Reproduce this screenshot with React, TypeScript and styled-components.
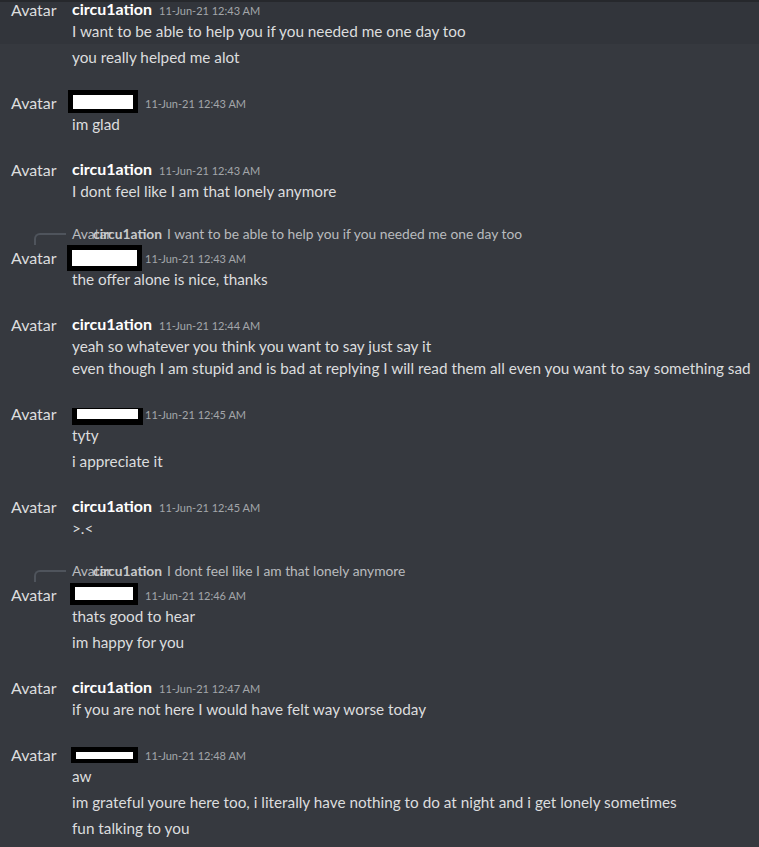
import React from "react";
import styled, { createGlobalStyle } from "styled-components";

const GlobalStyle = createGlobalStyle`
  html, body {
    margin: 0;
    padding: 0;
    background: #36393f;
  }
  body {
    font-family: Lato, "Noto Sans", sans-serif;
    color: #dcddde;
  }
`;

const Viewport = styled.div`
  height: 847px;
  overflow: hidden;
  background: #36393f;
`;

const TopEdge = styled.div`
  position: relative;
  z-index: 1;
  height: 2px;
  background: #26282c;
`;

const List = styled.div`
  display: flex;
  flex-direction: column;
  margin-top: -6px;
`;

const Message = styled.div<{ $start?: boolean; $hover?: boolean }>`
  padding: 2px 0;
  margin-top: ${(p) => (p.$start ? "19px" : "0")};
  background: ${(p) => (p.$hover ? "#32353b" : "transparent")};
  display: grid;
  grid-template-columns: 72px 1fr;
`;

const ReplyBar = styled.div`
  grid-column: 1 / -1;
  position: relative;
  display: flex;
  align-items: center;
  height: 18px;
  margin-bottom: 3px;
  padding-left: 72px;
  font-size: 13.8px;
  line-height: 18px;
  color: #b9bbbe;
  white-space: nowrap;

  &::before {
    content: "";
    position: absolute;
    left: 34px;
    top: 8px;
    width: 30px;
    height: 10px;
    border-left: 2px solid #4f545c;
    border-top: 2px solid #4f545c;
    border-top-left-radius: 6px;
  }
`;

const ReplyAvatar = styled.span`
  display: inline-block;
  width: 16px;
  margin-right: 5px;
  overflow: visible;
  white-space: nowrap;
  color: #b9bbbe;
`;

const ReplyName = styled.span`
  position: relative;
  font-weight: 700;
  color: #c7c9cb;
`;

const ReplyText = styled.span`
  margin-left: 5px;
`;

const AvatarCell = styled.div`
  padding: 1px 0 0 11px;
  font-size: 16px;
  line-height: 22px;
  color: #dcddde;
  white-space: nowrap;
`;

const Body = styled.div`
  grid-column: 2;
  min-width: 0;
`;

const Header = styled.div`
  height: 22px;
  line-height: 22px;
  white-space: nowrap;
`;

const Name = styled.span`
  font-size: 16px;
  font-weight: 700;
  color: #ffffff;
`;

const NameSlot = styled.span`
  position: relative;
  display: inline-block;
  vertical-align: top;
  width: 73px;
  height: 22px;
`;

const Redaction = styled.span<{
  $l: number;
  $t: number;
  $w: number;
  $h: number;
  $b: [number, number, number, number];
}>`
  position: absolute;
  left: ${(p) => p.$l}px;
  top: ${(p) => p.$t}px;
  width: ${(p) => p.$w}px;
  height: ${(p) => p.$h}px;
  box-sizing: border-box;
  background: #ffffff;
  border-style: solid;
  border-color: #000000;
  border-width: ${(p) => p.$b.map((v) => `${v}px`).join(" ")};
`;

const Time = styled.span<{ $afterName?: boolean }>`
  margin-left: ${(p) => (p.$afterName ? "7px" : "0")};
  font-size: 11px;
  color: #a3a6aa;
`;

const Line = styled.div`
  font-size: 15.3px;
  line-height: 22px;
  white-space: nowrap;
  color: #dcddde;
`;

type Box = { l: number; t: number; w: number; h: number; b: [number, number, number, number] };

type Group = {
  author?: string;
  redact?: Box;
  time: string;
  hover?: boolean;
  reply?: { name: string; text: string };
  first: string[];
  follow?: string[];
};

const groups: Group[] = [
  {
    author: "circu1ation",
    time: "11-Jun-21 12:43 AM",
    hover: true,
    first: ["I want to be able to help you if you needed me one day too"],
    follow: ["you really helped me alot"],
  },
  {
    redact: { l: -4, t: -1, w: 70, h: 23, b: [5, 5, 4, 5] },
    time: "11-Jun-21 12:43 AM",
    first: ["im glad"],
  },
  {
    author: "circu1ation",
    time: "11-Jun-21 12:43 AM",
    first: ["I dont feel like I am that lonely anymore"],
  },
  {
    redact: { l: -5, t: -1, w: 75, h: 26, b: [5, 5, 5, 5] },
    time: "11-Jun-21 12:43 AM",
    reply: { name: "circu1ation", text: "I want to be able to help you if you needed me one day too" },
    first: ["the offer alone is nice, thanks"],
  },
  {
    author: "circu1ation",
    time: "11-Jun-21 12:44 AM",
    first: [
      "yeah so whatever you think you want to say just say it",
      "even though I am stupid and is bad at replying I will read them all even you want to say something sad",
    ],
  },
  {
    redact: { l: 0, t: 6, w: 71, h: 17, b: [1, 5, 6, 5] },
    time: "11-Jun-21 12:45 AM",
    first: ["tyty"],
    follow: ["i appreciate it"],
  },
  {
    author: "circu1ation",
    time: "11-Jun-21 12:45 AM",
    first: [">.<"],
  },
  {
    redact: { l: -2, t: 0, w: 68, h: 22, b: [4, 5, 5, 5] },
    time: "11-Jun-21 12:46 AM",
    reply: { name: "circu1ation", text: "I dont feel like I am that lonely anymore" },
    first: ["thats good to hear"],
    follow: ["im happy for you"],
  },
  {
    author: "circu1ation",
    time: "11-Jun-21 12:47 AM",
    first: ["if you are not here I would have felt way worse today"],
  },
  {
    redact: { l: -1, t: 4, w: 67, h: 16, b: [5, 5, 4, 5] },
    time: "11-Jun-21 12:48 AM",
    first: ["aw"],
    follow: [
      "im grateful youre here too, i literally have nothing to do at night and i get lonely sometimes",
      "fun talking to you",
    ],
  },
];

function GroupView({ g, index }: { g: Group; index: number }) {
  return (
    <>
      <Message $start={index > 0} $hover={g.hover}>
        {g.reply && (
          <ReplyBar>
            <ReplyAvatar>Avatar</ReplyAvatar>
            <ReplyName>{g.reply.name}</ReplyName>
            <ReplyText>{g.reply.text}</ReplyText>
          </ReplyBar>
        )}
        <AvatarCell>Avatar</AvatarCell>
        <Body>
          <Header>
            {g.author ? (
              <>
                <Name>{g.author}</Name>
                <Time $afterName>{g.time}</Time>
              </>
            ) : (
              <>
                <NameSlot>
                  {g.redact && (
                    <Redaction
                      $l={g.redact.l}
                      $t={g.redact.t}
                      $w={g.redact.w}
                      $h={g.redact.h}
                      $b={g.redact.b}
                    />
                  )}
                </NameSlot>
                <Time>{g.time}</Time>
              </>
            )}
          </Header>
          {g.first.map((t, i) => (
            <Line key={i}>{t}</Line>
          ))}
        </Body>
      </Message>
      {(g.follow || []).map((t, i) => (
        <Message key={i}>
          <Body>
            <Line>{t}</Line>
          </Body>
        </Message>
      ))}
    </>
  );
}

export default function App() {
  return (
    <Viewport>
      <GlobalStyle />
      <TopEdge />
      <List>
        {groups.map((g, i) => (
          <GroupView key={i} g={g} index={i} />
        ))}
      </List>
    </Viewport>
  );
}
